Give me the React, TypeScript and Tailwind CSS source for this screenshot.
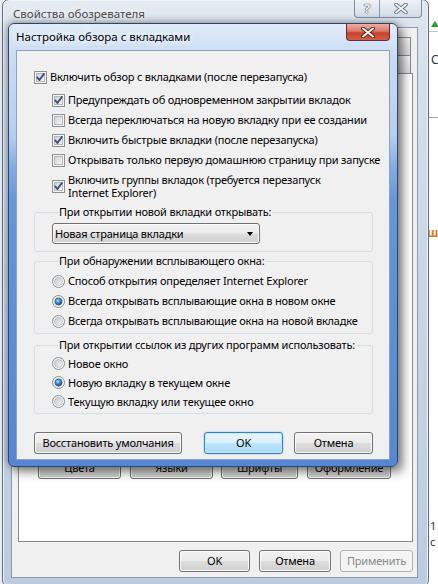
import React from "react";

function CheckBox({ checked }: { checked: boolean }) {
  return (
    <svg width="13" height="13" viewBox="0 0 13 13" className="shrink-0">
      <defs>
        <linearGradient id="cbIn" x1="0" y1="0" x2="1" y2="1">
          <stop offset="0" stopColor="#cdd0d5" />
          <stop offset="1" stopColor="#f7f7f7" />
        </linearGradient>
      </defs>
      <rect x="0.5" y="0.5" width="12" height="12" fill="#f6f6f6" stroke="#8e8f8f" />
      <rect x="2.5" y="2.5" width="8" height="8" fill="url(#cbIn)" stroke="#b4b8bd" />
      {checked && (
        <path d="M3.2 6.4 L5.4 9 L9.9 3" fill="none" stroke="#3b4d80" strokeWidth="1.9" strokeLinecap="round" strokeLinejoin="round" />
      )}
    </svg>
  );
}

function Radio({ checked }: { checked: boolean }) {
  return (
    <svg width="13" height="13" viewBox="0 0 13 13" className="shrink-0">
      <defs>
        <linearGradient id="rbOut" x1="0" y1="0" x2="1" y2="1">
          <stop offset="0" stopColor="#eeeeee" />
          <stop offset="1" stopColor="#ffffff" />
        </linearGradient>
        <linearGradient id="rbIn" x1="0" y1="0" x2="1" y2="1">
          <stop offset="0" stopColor="#c6cacf" />
          <stop offset="1" stopColor="#f4f4f4" />
        </linearGradient>
        <radialGradient id="rbDot" cx="0.4" cy="0.35" r="0.7">
          <stop offset="0" stopColor="#b0e0ff" />
          <stop offset="0.5" stopColor="#3a8fd6" />
          <stop offset="1" stopColor="#153f7a" />
        </radialGradient>
      </defs>
      <circle cx="6.5" cy="6.5" r="6" fill="url(#rbOut)" stroke="#8e8f8f" />
      <circle cx="6.5" cy="6.5" r="4" fill="url(#rbIn)" stroke="#b8bcc1" strokeWidth="0.8" />
      {checked && <circle cx="6.5" cy="6.5" r="3.4" fill="url(#rbDot)" stroke="#1d4f8c" strokeWidth="0.6" />}
    </svg>
  );
}

const btn =
  "flex items-center justify-center rounded-[3px] border border-[#707070] bg-[linear-gradient(to_bottom,#f2f2f2_0%,#ebebeb_48%,#dddddd_52%,#cfcfcf_100%)] shadow-[inset_0_0_0_1px_#fbfbfb] text-[11px] leading-[16px] tracking-[-0.2px] text-black";

function CheckRow({ checked, children }: { checked: boolean; children: React.ReactNode }) {
  return (
    <div className="flex h-[16px] items-center gap-[3px] whitespace-nowrap">
      <CheckBox checked={checked} />
      <span>{children}</span>
    </div>
  );
}

function RadioRow({ checked, children, h }: { checked: boolean; children: React.ReactNode; h: string }) {
  return (
    <div className={"flex items-center gap-[3px] whitespace-nowrap " + h}>
      <Radio checked={checked} />
      <span>{children}</span>
    </div>
  );
}

function Tab() {
  return (
    <div className="-ml-px h-[18px] flex-1 border border-b-0 border-[#898c95] bg-[linear-gradient(to_bottom,#f4f4f4,#dcdcdc)] first:ml-0" />
  );
}

export default function App() {
  return (
    <div className="relative h-[584px] w-[438px] overflow-hidden bg-[#e9edf2] font-['Noto_Sans',sans-serif] text-black">
      {/* browser behind, right edge */}
      <div className="absolute left-[428px] top-0 h-full w-[10px] bg-white" />
      <div className="absolute left-[428px] top-[31px] h-px w-[10px] bg-[#c3c8cf]" />
      <div className="absolute left-[431px] top-[21px] h-0 w-0 border-x-[4px] border-b-[6px] border-x-transparent border-b-[#2e9a3a]" />
      <div className="absolute left-[431px] top-[52px] text-[12px] leading-[16px] text-[#333]">C</div>
      <div className="absolute left-[428px] top-[117px] h-px w-[10px] bg-[#9aa0a8]" />
      <div className="absolute left-[427px] top-[225px] text-[12px] font-bold leading-[16px] text-[#e07a1a]">ш</div>
      <div className="absolute left-[430px] top-[518px] text-[11px] leading-[16px] text-[#333]">1 c</div>

      {/* background window: Свойства обозревателя */}
      <div className="absolute left-[2px] top-[-1px] flex h-[588px] w-[427px] flex-col rounded-[7px] border border-[#5d6b80] bg-[linear-gradient(to_bottom,#e6ebf1_0%,#d9e2ec_5%,#cbd8e7_40%,#bccbe0_100%)] shadow-[inset_0_0_0_1px_#eef3f8]">
        <div className="relative flex h-[27px] shrink-0 items-center pl-[10px]">
          <span className="text-[11.5px] leading-[16px] text-[#4a4a4a] [text-shadow:0_0_6px_#fff,0_0_10px_#fff]">
            Свойства обозревателя
          </span>
          <div className="absolute right-[6px] top-0 flex h-[18px] overflow-hidden rounded-b-[4px] border border-t-0 border-[#7f8b9c] bg-[linear-gradient(to_bottom,#eef2f6,#d3dbe6)]">
            <div className="flex w-[25px] items-center justify-center border-r border-[#8e9aab] text-[13px] font-bold leading-none text-[#eef2f6] [text-shadow:0_0_1px_#555,0_0_1px_#555,0_0_1px_#555]">
              ?
            </div>
            <div className="flex w-[41px] items-center justify-center">
              <svg width="14" height="11" viewBox="0 0 14 11">
                <path d="M2 1.5 L12 9.5 M12 1.5 L2 9.5" stroke="#6a7482" strokeWidth="3.6" strokeLinecap="round" />
                <path d="M2 1.5 L12 9.5 M12 1.5 L2 9.5" stroke="#f4f6f9" strokeWidth="1.8" strokeLinecap="round" />
              </svg>
            </div>
          </div>
        </div>
        <div className="mb-[8px] ml-[8px] mr-[10px] flex flex-1 flex-col border border-[#8c9bb0] bg-[#f0f0f0] pl-[6px] pr-[4px] pt-[9px]">
          <div className="mr-[2px] flex">
            <Tab />
            <Tab />
            <Tab />
          </div>
          <div className="mr-[2px] flex">
            <Tab />
            <Tab />
            <Tab />
            <Tab />
          </div>
          <div className="flex h-[469px] flex-col justify-end border border-[#898c95] bg-white pb-[62px] pl-[19px]">
            <div className="flex">
              <div className={btn + " h-[22px] w-[83px]"}>Цвета</div>
              <div className={btn + " ml-[9px] h-[22px] w-[83px]"}>Языки</div>
              <div className={btn + " ml-[8px] h-[22px] w-[77px]"}>Шрифты</div>
              <div className={btn + " ml-[9px] h-[22px] w-[84px]"}>Оформление</div>
            </div>
          </div>
          <div className="mt-[8px] flex justify-end gap-[9px]">
            <div className={btn + " h-[22px] w-[71px]"}>OK</div>
            <div className={btn + " h-[22px] w-[72px]"}>Отмена</div>
            <div className="flex h-[22px] w-[73px] items-center justify-center rounded-[3px] border border-[#adb2b5] bg-[#f4f4f4] text-[11px] tracking-[-0.2px] text-[#8a8a8a]">
              Применить
            </div>
          </div>
        </div>
      </div>

      {/* foreground dialog */}
      <div className="absolute left-[8px] top-[23px] flex h-[444px] w-[390px] flex-col rounded-[6px] border border-[#2f4666] bg-[linear-gradient(to_bottom,#e2ecf9_0%,#c9dcf3_7%,#b6cfef_25%,#86aee4_32%,#6496dc_40%,#5587d4_100%)] shadow-[0_0_8px_rgba(0,0,0,0.45),6px_6px_10px_rgba(0,0,0,0.35)]">
        <div className="relative flex h-[26px] shrink-0 items-center pl-[7px]">
          <span className="text-[11.5px] leading-[16px] text-black [text-shadow:0_0_6px_#fff,0_0_10px_#fff]">
            Настройка обзора с вкладками
          </span>
          <div className="absolute right-[7px] top-0 flex h-[17px] w-[44px] items-center justify-center rounded-b-[4px] border border-t-0 border-[#6b2a23] bg-[linear-gradient(to_bottom,#eab0a2_0%,#d9786a_45%,#c8412f_55%,#d0604a_100%)]">
            <svg width="14" height="11" viewBox="0 0 14 11">
              <path d="M2 1.5 L12 9.5 M12 1.5 L2 9.5" stroke="#5b1d15" strokeWidth="3.8" strokeLinecap="round" />
              <path d="M2 1.5 L12 9.5 M12 1.5 L2 9.5" stroke="#ffffff" strokeWidth="2" strokeLinecap="round" />
            </svg>
          </div>
        </div>
        <div className="mx-[7px] mb-[6px] flex flex-1 flex-col border border-[#8ba3c3] bg-[#f0f0f0] pl-[17px] pr-[16px] pt-[18px] text-[11px] leading-[16px] tracking-[-0.2px]">
          <CheckRow checked>Включить обзор с вкладками (после перезапуска)</CheckRow>
          <div className="mt-[7px] flex flex-col gap-[4px] pl-[18px]">
            <CheckRow checked>Предупреждать об одновременном закрытии вкладок</CheckRow>
            <CheckRow checked={false}>Всегда переключаться на новую вкладку при ее создании</CheckRow>
            <CheckRow checked>Включить быстрые вкладки (после перезапуска)</CheckRow>
            <CheckRow checked={false}>Открывать только первую домашнюю страницу при запуске</CheckRow>
            <div className="mt-[1px] flex items-center gap-[3px] whitespace-nowrap leading-[13px]">
              <CheckBox checked />
              <span>
                Включить группы вкладок (требуется перезапуск
                <br />
                Internet Explorer)
              </span>
            </div>
          </div>

          <fieldset className="mt-[5px] rounded-[3px] border border-[#d5dfe5] pb-[7px] pl-[17px]">
            <legend className="ml-[6px] px-[1px]">При открытии новой вкладки открывать:</legend>
            <div className={btn + " !justify-start mt-[3px] h-[21px] w-[208px] pl-[2px]"}>
              <span className="flex-1">Новая страница вкладки</span>
              <span className="mr-[6px] h-0 w-0 border-x-[3.5px] border-t-[4px] border-x-transparent border-t-black" />
            </div>
          </fieldset>

          <fieldset className="mt-[1px] rounded-[3px] border border-[#d5dfe5] pb-[2px] pl-[17px]">
            <legend className="ml-[6px] px-[1px]">При обнаружении всплывающего окна:</legend>
            <div className="mt-[2px] flex flex-col">
              <RadioRow checked={false} h="h-[20px]">Способ открытия определяет Internet Explorer</RadioRow>
              <RadioRow checked h="h-[20px]">Всегда открывать всплывающие окна в новом окне</RadioRow>
              <RadioRow checked={false} h="h-[20px]">Всегда открывать всплывающие окна на новой вкладке</RadioRow>
            </div>
          </fieldset>

          <fieldset className="mt-[3px] rounded-[3px] border border-[#d5dfe5] pb-[2px] pl-[17px]">
            <legend className="ml-[6px] px-[1px]">При открытии ссылок из других программ использовать:</legend>
            <div className="mt-[1px] flex flex-col">
              <RadioRow checked={false} h="h-[19px]">Новое окно</RadioRow>
              <RadioRow checked h="h-[19px]">Новую вкладку в текущем окне</RadioRow>
              <RadioRow checked={false} h="h-[19px]">Текущую вкладку или текущее окно</RadioRow>
            </div>
          </fieldset>

          <div className="mt-[18px] flex items-center">
            <div className={btn + " h-[22px] w-[148px]"}>Восстановить умолчания</div>
            <div className="ml-auto flex gap-[11px]">
              <div className="flex h-[22px] w-[79px] items-center justify-center rounded-[3px] border border-[#3c7fb1] bg-[linear-gradient(to_bottom,#eaf6fd_0%,#d9f0fc_48%,#bee6fd_52%,#a7d9f5_100%)] shadow-[inset_0_0_0_1px_#c5e7fb,0_0_2px_#7fc3f0] text-[11px] tracking-[-0.2px]">
                OK
              </div>
              <div className={btn + " h-[22px] w-[79px]"}>Отмена</div>
            </div>
          </div>
        </div>
      </div>
    </div>
  );
}
